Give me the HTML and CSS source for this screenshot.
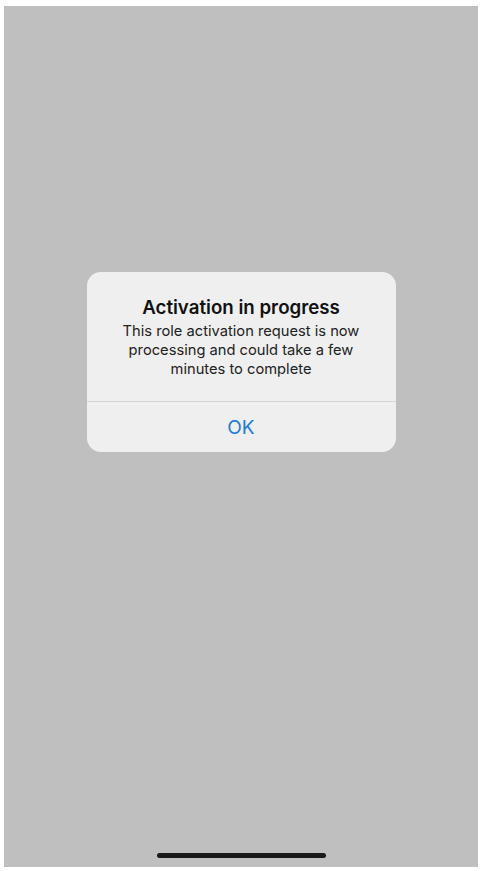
FILE: index.html
```html
<!DOCTYPE html>
<html>
<head>
<meta charset="utf-8">
<link rel="stylesheet" href="styles.css">
</head>
<body>
<div class="screen">
  <div class="alert">
    <div class="alert-body">
      <div class="alert-title">Activation in progress</div>
      <div class="alert-message">This role activation request is now processing and could take a few minutes to complete</div>
    </div>
    <div class="alert-actions">
      <div class="alert-button">OK</div>
    </div>
  </div>
  <div class="home-indicator"></div>
</div>
</body>
</html>
```
FILE: styles.css
```css
html, body {
  margin: 0;
  padding: 0;
  background: #ffffff;
  width: 483px;
  height: 871px;
  overflow: hidden;
}
body {
  padding: 6px 5px 4px 4px;
  box-sizing: border-box;
  font-family: Inter, "Noto Sans", sans-serif;
}
.screen {
  background: #bfbfbf;
  height: 100%;
  display: flex;
  flex-direction: column;
  align-items: center;
  padding-top: 266px;
  box-sizing: border-box;
}
.alert {
  width: 309px;
  background: #efefef;
  border-radius: 14px;
  display: flex;
  flex-direction: column;
}
.alert-body {
  padding: 24px 16px 22px;
  text-align: center;
}
.alert-title {
  font-size: 18.7px;
  font-weight: 600;
  color: #111111;
  line-height: 24px;
}
.alert-message {
  margin-top: 2px;
  font-size: 14.7px;
  line-height: 19px;
  color: #222222;
  padding: 0 18px;
}
.alert-actions {
  border-top: 1px solid #d6d6d6;
}
.alert-button {
  height: 50px;
  display: flex;
  align-items: center;
  justify-content: center;
  font-size: 19px;
  color: #1c7bd6;
}
.home-indicator {
  margin-top: auto;
  margin-bottom: 9px;
  width: 169px;
  height: 5px;
  border-radius: 3px;
  background: #1a1a1a;
}
```
